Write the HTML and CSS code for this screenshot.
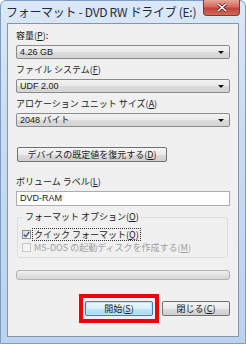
FILE: index.html
```html
<!DOCTYPE html>
<html lang="ja">

<head>
    <meta charset="UTF-8">
    <meta name="viewport" content="width=device-width, initial-scale=1.0">
    <title>フォーマット</title>
    <link rel="stylesheet" href="styles.css">
</head>

<body>
    <div class="window">
        <div class="titleBar">
            <span class="titleText">フォーマット - DVD RW ドライブ (E:)</span>
            <div class="closeBox">
                <svg width="12" height="9" viewBox="0 0 12 9">
                    <path d="M2 1 L10 8 M10 1 L2 8" stroke="#5a1f1f" stroke-width="3" />
                    <path d="M2 1 L10 8 M10 1 L2 8" stroke="#ffffff" stroke-width="1.6" />
                </svg>
            </div>
        </div>
        <div class="client">
            <p class="label">容量(<u>P</u>):</p>
            <div class="combo"><span>4.26 GB</span><span class="arrow"></span></div>

            <p class="label">ファイル システム(<u>F</u>)</p>
            <div class="combo"><span>UDF 2.00</span><span class="arrow"></span></div>

            <p class="label">アロケーション ユニット サイズ(<u>A</u>)</p>
            <div class="combo"><span>2048 バイト</span><span class="arrow"></span></div>

            <button class="winButton restoreButton">デバイスの既定値を復元する(<u>D</u>)</button>

            <p class="label volumeLabel">ボリューム ラベル(<u>L</u>)</p>
            <div class="textBox">DVD-RAM</div>

            <div class="groupBox">
                <span class="groupTitle">フォーマット オプション(<u>O</u>)</span>
                <div class="checkRow">
                    <span class="checkBox checked">
                        <svg width="7" height="7" viewBox="0 0 7 7">
                            <path d="M0.8 3.6 L2.8 5.6 L6.3 1" stroke="#3c5a8c" stroke-width="1.5" fill="none" />
                        </svg>
                    </span>
                    <span class="checkText focused">クイック フォーマット(<u>Q</u>)</span>
                </div>
                <div class="checkRow disabled">
                    <span class="checkBox"></span>
                    <span class="checkText">MS-DOS の起動ディスクを作成する(<u>M</u>)</span>
                </div>
            </div>

            <div class="progressBar"></div>

            <div class="buttonRow">
                <div class="redMark">
                    <button class="winButton defaultButton">開始(<u>S</u>)</button>
                </div>
                <button class="winButton">閉じる(<u>C</u>)</button>
            </div>
        </div>
    </div>
</body>

</html>
```

FILE: styles.css
```css
* {
    margin: 0;
    padding: 0;
    box-sizing: border-box;
}

body {
    width: 246px;
    height: 344px;
    background-color: #ffffff;
    font-family: "Noto Sans CJK JP", "Liberation Sans", sans-serif;
    font-size: 9px;
    color: #1a1a1a;
}

u {
    text-decoration: underline;
    text-underline-offset: 1px;
}

.window {
    width: 246px;
    height: 344px;
    display: flex;
    flex-direction: column;
    background: linear-gradient(to bottom, #dbe8f7 0%, #c8dbf2 40%, #bcd3ee 100%);
    border: 1px solid #7d9cc2;
    border-radius: 6px 6px 0 0;
}

.titleBar {
    height: 22px;
    display: flex;
    justify-content: space-between;
    align-items: flex-start;
    padding-left: 5px;
    padding-right: 5px;
}

.titleText {
    font-size: 12px;
    line-height: 22px;
    color: #1e2b3c;
    letter-spacing: -0.3px;
}

.closeBox {
    width: 37px;
    height: 16px;
    margin-top: -1px;
    display: flex;
    align-items: center;
    justify-content: center;
    background: linear-gradient(to bottom, #e8a49a 0%, #d46a5d 45%, #c2433a 55%, #d06a5a 100%);
    border: 1px solid #7a3a35;
    border-top: none;
    border-radius: 0 0 4px 4px;
}

.client {
    flex: 1;
    margin: 0 6px 6px 6px;
    background-color: #f0f0f0;
    border: 1px solid #8496ad;
    padding: 6px 8px 0 8px;
    display: flex;
    flex-direction: column;
}

.label {
    line-height: 12px;
    height: 12px;
    margin-bottom: 3px;
    white-space: nowrap;
}

.combo {
    height: 14px;
    display: flex;
    justify-content: space-between;
    align-items: center;
    padding: 0 5px 0 3px;
    background: linear-gradient(to bottom, #f3f3f3 0%, #e9e9e9 50%, #dcdcdc 51%, #d4d4d4 100%);
    border: 1px solid #8a8a8a;
    border-radius: 2px;
    margin-bottom: 5px;
    font-family: "Liberation Sans", "Noto Sans CJK JP", sans-serif;
    line-height: 12px;
}

.arrow {
    width: 0;
    height: 0;
    border-left: 3px solid transparent;
    border-right: 3px solid transparent;
    border-top: 3px solid #111111;
}

.winButton {
    height: 15px;
    font-family: "Noto Sans CJK JP", "Liberation Sans", sans-serif;
    font-size: 9px;
    line-height: 12px;
    color: #1a1a1a;
    background: linear-gradient(to bottom, #f4f4f4 0%, #ebebeb 50%, #dddddd 51%, #cfcfcf 100%);
    border: 1px solid #707070;
    border-radius: 2px;
}

.restoreButton {
    width: 150px;
    margin-top: 15px;
    margin-left: 1px;
}

.volumeLabel {
    margin-top: 14px;
}

.textBox {
    height: 15px;
    background-color: #ffffff;
    border: 1px solid #abadb3;
    padding-left: 3px;
    line-height: 13px;
    font-family: "Liberation Sans", "Noto Sans CJK JP", sans-serif;
}

.groupBox {
    position: relative;
    margin: 11px 2px 0 1px;
    height: 41px;
    border: 1px solid #d5dfe5;
    border-radius: 3px;
    padding: 10px 0 0 4px;
}

.groupTitle {
    position: absolute;
    top: -7px;
    left: 5px;
    padding: 0 2px;
    line-height: 12px;
    background-color: #f0f0f0;
}

.checkRow {
    height: 12px;
    display: flex;
    align-items: center;
    gap: 2px;
    white-space: nowrap;
}

.checkBox {
    width: 9px;
    height: 9px;
    border: 1px solid #8f8f8f;
    background: linear-gradient(135deg, #dcdcdc 0%, #ffffff 100%);
    display: flex;
    align-items: center;
    justify-content: center;
}

.checkText {
    line-height: 11px;
    padding: 0 1px;
}

.focused {
    outline: 1px dotted #333333;
}

.disabled {
    color: #a0a0a0;
    margin-top: 1px;
}

.disabled .checkBox {
    border-color: #c8c8c8;
    background: #f4f4f4;
}

.progressBar {
    height: 10px;
    margin-top: 12px;
    background: linear-gradient(to bottom, #f0f0f0 0%, #e2e2e2 50%, #d6d6d6 100%);
    border: 1px solid #b2b2b2;
    border-radius: 3px;
}

.buttonRow {
    display: flex;
    justify-content: flex-end;
    align-items: center;
    gap: 3px;
    margin-top: 14px;
}

.buttonRow .winButton {
    width: 68px;
}

.redMark {
    border: 4px solid #f00000;
    padding: 3px 2px;
    display: flex;
}

.defaultButton {
    border-color: #3c7fb1;
    background: linear-gradient(to bottom, #eaf6fd 0%, #d9f0fc 50%, #bee6fd 51%, #a7d9f5 100%);
    box-shadow: inset 0 0 0 1px #c0e4f8;
}
```
